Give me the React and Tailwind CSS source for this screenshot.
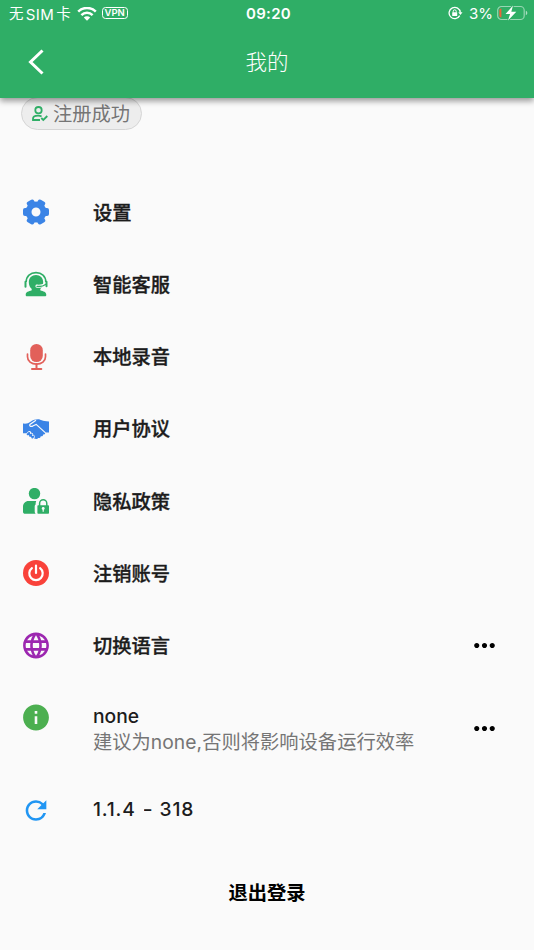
import React from 'react';
import { MdLanguage, MdInfo, MdRefresh, MdMoreHoriz } from 'react-icons/md';

const Svg = ({ children, ...p }) => (
  <svg viewBox="0 0 26 26" className="h-[26px] w-[26px]" fill="currentColor" {...p}>
    {children}
  </svg>
);

const Gear = () => (
  <Svg color="#3b84e6">
    <circle cx="13" cy="13" r="7.500" fill="none" stroke="currentColor" strokeWidth="6" />
    {[0, 60, 120, 180, 240, 300].map((a) => (
      <rect key={a} x="18" y="9" width="8" height="8" rx="2" fill="currentColor" transform={`rotate(${a} 13 13)`} />
    ))}
  </Svg>
);

const Agent = () => (
  <Svg color="#2fae66">
    <path d="M13 4c4.200 0 7.200 3 7.200 7.300 0 3-1.200 5.300-3 6.800l.3 1.500c2.700.6 5.800 1.500 5.800 4.300 0 .8-.5 1.300-1.300 1.300H4c-.8 0-1.300-.5-1.300-1.300 0-2.800 3.100-3.700 5.800-4.300l.3-1.500c-1.800-1.500-3-3.800-3-6.800C5.800 7 8.800 4 13 4z" />
    <path d="M14 15.200c3.500.4 6.300-.3 8.600-2" fill="none" stroke="#fafafa" strokeWidth="3.200" strokeLinecap="round" />
    <path d="M14 15.400c3.700.4 6.500-.3 9-2.200" fill="none" stroke="currentColor" strokeWidth="1.300" strokeLinecap="round" />
    <path d="M3.200 11C3.200 5 7.400 1.600 13 1.600S22.800 5 22.800 11" fill="none" stroke="currentColor" strokeWidth="1.600" />
    <path d="M2.500 10.700v5M23.500 10.700v4.500" fill="none" stroke="currentColor" strokeWidth="2" strokeLinecap="round" />
  </Svg>
);

const Mic = () => (
  <Svg color="#e2605a">
    <rect x="7.200" y="0" width="12.600" height="18" rx="6.300" />
    <path d="M4.500 10v2.800c0 4.500 3.900 7.400 9 7.400s9-2.900 9-7.400V10" fill="none" stroke="currentColor" strokeWidth="1.700" strokeLinecap="round" />
    <path d="M13.500 20v4.500M9 25h9.300" fill="none" stroke="currentColor" strokeWidth="2" strokeLinecap="round" />
  </Svg>
);

const Handshake = () => (
  <Svg color="#3b84e6">
    <path d="M0 7.500c3.200.5 5.300-.2 7.500-1.800C10 4 12.500 3.300 15 3.300c2.500 0 4 2 11 2.100v11h-3.800c.2 1.300-.7 2.200-2.200 2 .2 1.500-.9 2.200-2.300 1.900.1 1.400-1.300 2.100-2.500 1.600-.7 1.300-2.100 1.400-3.200.6l-1.700.3L3 17.200H0z" />
    <path d="M13 4.300L6.900 8.400c-.8 2.200 1.600 2.600 3.300 1.300l3-1.300 9.300 8.500" fill="none" stroke="#fafafa" strokeWidth="1.200" />
    <path d="M3 18.600l2.300-2.500c1.300-1 2.500-.2 2.400 1.400 1.300-.5 2.400.4 2 1.900 1.300-.2 2 1 1.300 2.300l-.9 1.200" fill="none" stroke="#fafafa" strokeWidth="1.100" />
    <path d="M4.500 18.400L6 16.900M6.900 20l1.600-1.600M9.200 21.700l1.200-1.300" stroke="currentColor" strokeWidth="1.600" strokeLinecap="round" />
  </Svg>
);

const UserLock = () => (
  <Svg color="#2fae66">
    <circle cx="11.500" cy="5.600" r="5.700" />
    <path d="M5.500 13h7.700c-.5 1.200-.6 2.300-.6 3.500-.6.400-.9 1-.9 1.800v5.200c0 1 .3 1.700.9 2.300H2.200C.9 25.800 0 25 0 23.700v-4.900C0 15.500 2.300 13 5.500 13z" />
    <path fillRule="evenodd" d="M15.200 17.300h10c.5 0 .8.300.8.800v6.900c0 .5-.3.800-.8.800h-10c-.5 0-.8-.3-.8-.8v-6.900c0-.5.3-.8.800-.8zM20.200 19.100a1.400 1.400 0 0 0-.6 2.700v2h1.200v-2a1.400 1.400 0 0 0-.6-2.700z" />
    <path d="M16.600 18v-2.600a3.600 3.600 0 0 1 7.200 0V18" fill="none" stroke="currentColor" strokeWidth="1.500" />
  </Svg>
);

const Power = () => (
  <Svg>
    <circle cx="13" cy="13" r="13" fill="#f9423a" />
    <path d="M8.900 8.100a6.700 6.700 0 1 0 8.200 0M13 5.500v7.500" fill="none" stroke="#fff" strokeWidth="2.200" strokeLinecap="round" />
  </Svg>
);

const items = [
  ['设置', <Gear />],
  ['智能客服', <Agent />],
  ['本地录音', <Mic />],
  ['用户协议', <Handshake />],
  ['隐私政策', <UserLock />],
  ['注销账号', <Power />],
  ['切换语言', <MdLanguage size={31} color="#9c27b0" className="-translate-x-[0.500px]" />, true],
];

const Row = ({ icon, more, tall, children }) => (
  <div className={`flex items-center ${tall ? 'h-[92.500px]' : 'h-[72.250px]'}`}>
    <div className={`flex w-[26px] shrink-0 justify-center ${tall ? '-mt-[22px]' : ''}`}>
      <div className="shrink-0">{icon}</div>
    </div>
    <div className="ml-[44px] flex-1 pt-0.5">{children}</div>
    {more && <MdMoreHoriz size={31} color="#000" />}
  </div>
);

const StatusBar = () => (
  <div className="flex h-7 items-center pr-[6px] pl-[9px] leading-none">
    <div className="flex flex-1 items-center">
      <span className="text-[14.500px] tracking-[0.300px]">无</span>
      <span className="ml-[2px] text-[15px] tracking-[0.400px]">SIM</span>
      <span className="ml-[2px] text-[14.500px]">卡</span>
      <svg className="ml-[6px] h-[15px] w-5" viewBox="0 0 20 15" fill="none" stroke="#fff" strokeWidth="2.500">
        <path d="M1.200 4.600a12.500 12.500 0 0 1 17.600 0M4.400 8.100a8 8 0 0 1 11.200 0" />
        <path d="M10 13.700l-3.200-3.200a4.600 4.600 0 0 1 6.400 0z" fill="#fff" stroke="none" />
      </svg>
      <span className="ml-[5px] flex h-3 w-[26px] -translate-y-px items-center justify-center rounded-[3.500px] border border-white text-[9.500px] font-semibold">VPN</span>
    </div>
    <span className="-translate-y-px text-[15px] font-semibold tracking-[0.300px]">09:20</span>
    <div className="flex flex-1 -translate-y-px items-center justify-end">
      <svg className="h-[14px] w-[15px]" viewBox="0 0 15 14" fill="none" stroke="#fff" strokeWidth="1.300">
        <path d="M11.700 9.600A5.600 5.600 0 1 1 12.300 6.500" />
        <path d="M10.300 6.300h4.200l-2.100 2.700z" fill="#fff" stroke="none" />
        <rect x="4.200" y="6.200" width="5" height="3.800" rx=".5" fill="#fff" stroke="none" />
        <path d="M5.200 6.500V5.300a1.500 1.500 0 0 1 3 0v1.200" strokeWidth="1" />
      </svg>
      <span className="ml-[6px] text-[15px]">3%</span>
      <svg className="ml-[4px] h-4 w-[31px]" viewBox="0 0 31 16">
        <rect x=".7" y="1.500" width="26.500" height="13" rx="3.800" fill="none" stroke="#fff" strokeOpacity=".5" strokeWidth="1.200" />
        <path d="M28.800 5.800c2 .7 2 3.700 0 4.400z" fill="#fff" fillOpacity=".6" />
        <path d="M4.400 3.500v9C2.800 12.300 2.300 11.700 2.300 10.500v-5C2.300 4.300 2.800 3.700 4.400 3.500z" fill="#e9643b" />
        <path d="M16 .6L8.500 8.900h4.600L11 15.600 19.300 6.800h-5z" fill="#fff" stroke="#2fae66" strokeWidth="1.600" paintOrder="stroke" />
      </svg>
    </div>
  </div>
);

export default function App() {
  return (
    <div className="flex h-[950px] w-[534px] flex-col overflow-hidden bg-[#fafafa] font-['Inter','Noto_Sans_CJK_SC',sans-serif]">
      <header className="relative z-10 h-[98px] shrink-0 bg-[#2fae66] text-white shadow-[0_3px_6px_rgba(0,0,0,0.4)]">
        <StatusBar />
        <div className="grid h-[68px] grid-cols-[1fr_auto_1fr] items-center">
          <div className="pl-7">
            <svg className="h-[26px] w-4" viewBox="0 0 16 26" fill="none" stroke="#fff" strokeWidth="3">
              <path d="M14.500 1.500L2.500 13l12 11.500" />
            </svg>
          </div>
          <h1 className="pt-px text-[21.500px] font-light">我的</h1>
        </div>
      </header>

      <div className="flex h-[78px] shrink-0 items-start pl-[21px]">
        <div className="flex h-[33px] w-[121px] -translate-y-px items-center rounded-full border border-[#d5d5d5] bg-[#ededed] pl-[10px]">
          <svg className="h-4 w-4" viewBox="0 0 16 16" fill="none" stroke="#2fae66" strokeWidth="1.800">
            <circle cx="6.500" cy="4.200" r="3.200" />
            <path d="M8 14H1V12.800C1 10.600 3.500 9.700 6 9.700c1.300 0 2.600.2 3.600.8" />
            <path d="M9.300 12l2 2 4-4" />
          </svg>
          <span className="ml-[5px] pt-[3px] text-[19.250px] leading-none text-[#757575]">注册成功</span>
        </div>
      </div>

      <main className="pr-[34px] pl-[23px] text-[19.250px] text-[#1c1c1c]">
        {items.map(([label, icon, more]) => (
          <Row key={label} icon={icon} more={more}>
            <span className="font-medium [-webkit-text-stroke:0.350px_#1c1c1c]">{label}</span>
          </Row>
        ))}
        <Row icon={<MdInfo size={31} color="#4caf50" className="-translate-x-[0.500px]" />} more tall>
          <p className="leading-[26px] font-medium">none</p>
          <p className="leading-[26px] tracking-[0.040px] whitespace-nowrap text-[#757575]">建议为none,否则将影响设备运行效率</p>
        </Row>
        <Row icon={<MdRefresh size={31} color="#2196f3" className="-translate-x-[0.500px]" />}>
          <p className="-mt-[3px] font-medium tracking-[0.800px]">
            1.1.4<span className="mr-[7px] ml-[8px] inline-block w-[9px] origin-left scale-x-[0.75]">–</span>318
          </p>
        </Row>
      </main>
      <button className="mt-[32px] self-center text-[19.250px] font-bold text-black">退出登录</button>
    </div>
  );
}
